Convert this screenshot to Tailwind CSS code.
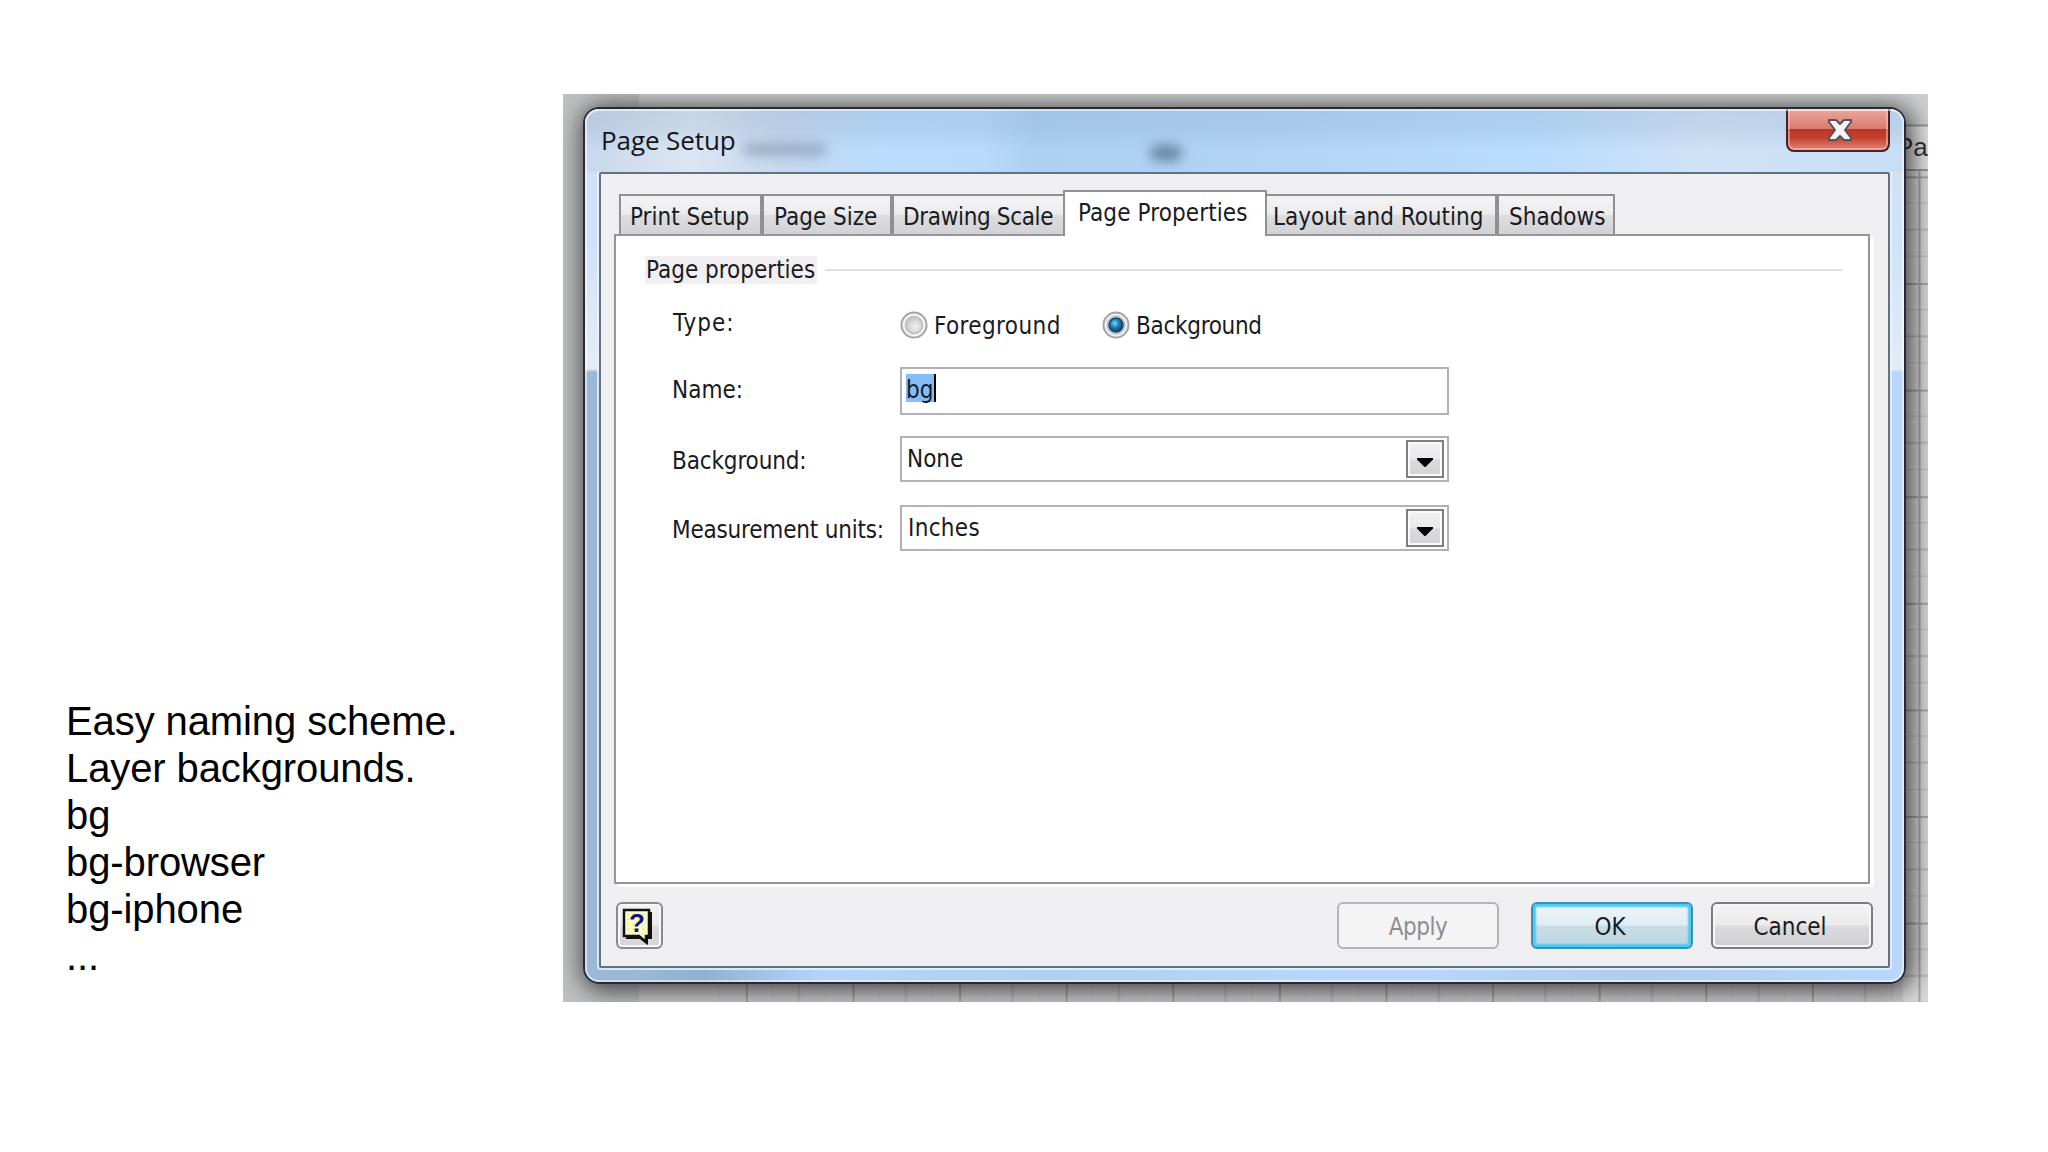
<!DOCTYPE html>
<html lang="en">

<head>
    <meta charset="UTF-8">
    <meta name="viewport" content="width=device-width, initial-scale=1.0">
    <title>Page Setup</title>
    <script src="https://cdn.jsdelivr.net/npm/@tailwindcss/browser@4"></script>
</head>

<body class="bg-white w-[2048px] h-[1152px] overflow-hidden flex items-start">
    <!-- Notes -->
    <div class="w-[563px] shrink-0 pl-[66px] pt-[698px] font-['Liberation_Sans',Arial,sans-serif] text-[40px] leading-[47px] tracking-[-0.1px] text-black">
        <p>Easy naming scheme.</p>
        <p>Layer backgrounds.</p>
        <p>bg</p>
        <p>bg-browser</p>
        <p>bg-iphone</p>
        <p>...</p>
    </div>

    <!-- Screenshot -->
    <div class="relative mt-[94px] w-[1365px] h-[908px] shrink-0 overflow-hidden bg-[#d0d1d2] pl-5 pt-[13px]">
        <!-- Drawing canvas behind the dialog -->
        <svg class="absolute inset-0" width="1365" height="908" viewBox="0 0 1365 908">
            <defs>
                <pattern id="grid" x="289.5" y="82.4" width="106.6" height="106.6" patternUnits="userSpaceOnUse">
                    <path d="M26.6 0V106.6M79.9 0V106.6M0 26.6H106.6M0 79.9H106.6" stroke="#c6c6c9" stroke-width="1.5" />
                    <path d="M53.3 0V106.6M0 53.3H106.6" stroke="#bababe" stroke-width="2" />
                    <path d="M1 0V106.6M0 1H106.6" stroke="#a6a6aa" stroke-width="2" />
                </pattern>
            </defs>
            <rect x="0" y="0" width="76" height="908" fill="#bfc1c3" />
            <rect x="76" y="860" width="1289" height="48" fill="#cfcdd0" />
            <rect x="150" y="860" width="1215" height="48" fill="url(#grid)" />
            <rect x="1340" y="32" width="25" height="44" fill="#e4e4e4" />
            <rect x="1340" y="76" width="25" height="832" fill="#dadadb" />
            <rect x="1340" y="76" width="25" height="832" fill="url(#grid)" />
            <path d="M1340 31.500H1365M1340 76H1365" stroke="#9a9a9a" stroke-width="2" />
            <text x="1333" y="62" font-family="Liberation Sans" font-size="26" fill="#333">Pag</text>
        </svg>

        <!-- Dialog -->
        <div class="relative w-[1323px] h-[877px] flex flex-col overflow-visible rounded-[16px] border-2 border-[#272a36] bg-[linear-gradient(to_bottom,#d3e2f4_0px,#cfe2f8_130px,#e4ecf7_260px,transparent_263px),linear-gradient(to_right,#9bb8d6_0%,#9bb8d6_4%,#8fb1d3_9%,#b5d4fa_18%,#afd0f0_35%,#bad6fd_60%,#b0cdf0_80%,#b9d6fc_100%)] shadow-[3px_3px_26px_3px_rgba(0,0,0,0.72)]">
            <!-- Title bar -->
            <div class="relative h-[63px] shrink-0 flex justify-between pl-4 pr-[14px] rounded-t-[14px] bg-[linear-gradient(to_bottom,rgba(110,140,170,0.18)_0%,rgba(110,140,170,0.15)_30%,rgba(255,255,255,0)_65%),linear-gradient(to_right,#c8d7ec_0%,#d9e6f3_8%,#c6d7ee_15%,#bbdcfd_22%,#b9dafb_30%,#add0f3_34%,#b2d3f6_50%,#badcfe_72%,#d0e2f6_85%,#c8def7_100%)]">
                <div class="absolute left-[158px] top-[35px] w-[84px] h-[11px] rounded-full bg-[#6f87a0]/60 blur-[6px]"></div>
                <div class="absolute left-[565px] top-[36px] w-[32px] h-[16px] rounded-full bg-[#5f7d9b]/90 blur-[6px]"></div>
                <h1 class="relative pt-[15px] font-['Open_Sans',sans-serif] text-[26px] leading-8 tracking-[-0.1px] text-[#15151c]">Page Setup</h1>
                <button class="relative w-[104px] h-[43px] flex justify-center items-center pl-1 rounded-b-[8px] border-2 border-t-0 border-[#4a2028] bg-[linear-gradient(to_bottom,#eba79d_0%,#d97c70_48%,#bb3524_50%,#c5402c_70%,#e0897a_100%)] shadow-[inset_0_0_0_2px_rgba(255,200,190,0.5)]">
                    <svg width="26" height="24" viewBox="0 0 26 24">
                        <path d="M2 2H9L13 6L17 2H24V4L18 12L24 20V22H17L13 18L9 22H2V20L8 12L2 4Z" fill="#f4f4f4" stroke="#58505c" stroke-width="2" stroke-linejoin="round" />
                    </svg>
                </button>
            </div>

            <!-- Client area -->
            <div class="mx-[14px] h-[796px] shrink-0 flex flex-col border-2 border-[#62727f] rounded-[2px] bg-[#efeff1] shadow-[0_0_0_2px_rgba(235,243,252,0.8)] font-['DejaVu_Sans_Condensed','DejaVu_Sans',sans-serif] text-2xl leading-7 text-[#1a1a22]">
                <!-- Tabs -->
                <div class="mt-[16px] pl-[18px] h-11 flex items-end whitespace-nowrap">
                    <div class="w-[143px] h-10 pl-[9px] pt-[7px] border-2 border-b-0 border-[#8f9094] bg-[linear-gradient(to_bottom,#f4f4f5_0%,#ececee_48%,#dededf_50%,#d2d2d4_100%)]">Print Setup</div>
                    <div class="w-[130px] h-10 pl-2.5 pt-[7px] border-2 border-b-0 border-[#8f9094] bg-[linear-gradient(to_bottom,#f4f4f5_0%,#ececee_48%,#dededf_50%,#d2d2d4_100%)]">Page Size</div>
                    <div class="w-[171px] h-10 pl-[9px] pt-[7px] border-2 border-b-0 border-r-0 border-[#8f9094] bg-[linear-gradient(to_bottom,#f4f4f5_0%,#ececee_48%,#dededf_50%,#d2d2d4_100%)] tracking-[-0.35px]">Drawing Scale</div>
                    <div class="relative w-[204px] h-[46px] -mb-0.5 pl-[13px] pt-[7px] border-2 border-b-0 border-[#8f9094] bg-white tracking-[0.1px]">Page Properties</div>
                    <div class="w-[230px] h-10 pl-[6px] pt-[7px] border-2 border-b-0 border-l-0 border-[#8f9094] bg-[linear-gradient(to_bottom,#f4f4f5_0%,#ececee_48%,#dededf_50%,#d2d2d4_100%)]">Layout and Routing</div>
                    <div class="w-[118px] h-10 pl-2.5 pt-[7px] border-2 border-b-0 border-[#8f9094] bg-[linear-gradient(to_bottom,#f4f4f5_0%,#ececee_48%,#dededf_50%,#d2d2d4_100%)]">Shadows</div>
                </div>

                <!-- Tab panel -->
                <div class="ml-[13px] w-[1256px] h-[650px] shrink-0 border-2 border-[#949599] bg-white shadow-[4px_3px_0_0_#fdfdfd]">
                    <div class="pt-5 pl-[30px] pr-[26px] flex items-center">
                        <span class="bg-[#f1eff1] pl-px -ml-px pr-0.5">Page properties</span>
                        <span class="ml-2 flex-1 h-0.5 bg-[#dfe0e5]"></span>
                    </div>

                    <div class="mt-6 pl-[56px]">
                        <div class="flex h-[59px]">
                            <span class="w-[228px] pt-px pl-px tracking-[1px]">Type:</span>
                            <div class="flex pt-1">
                                <svg class="-mt-px" width="28" height="28" viewBox="0 0 28 28">
                                    <defs>
                                        <radialGradient id="off" cx="0.6" cy="0.6" r="0.6">
                                            <stop offset="0" stop-color="#f2f2f2" />
                                            <stop offset="1" stop-color="#c4c4c6" />
                                        </radialGradient>
                                    </defs>
                                    <circle cx="14" cy="14" r="12.500" fill="#f3f3f3" stroke="#a3a4a8" stroke-width="2" />
                                    <circle cx="14" cy="14" r="8.500" fill="url(#off)" stroke="#bdbdc0" stroke-width="1.500" />
                                </svg>
                                <span class="ml-1.5 w-[168px] tracking-[0.4px]">Foreground</span>
                                <svg class="-mt-px" width="28" height="28" viewBox="0 0 28 28">
                                    <defs>
                                        <radialGradient id="on" cx="0.42" cy="0.38" r="0.6">
                                            <stop offset="0" stop-color="#7fdcfb" />
                                            <stop offset="0.45" stop-color="#2088bb" />
                                            <stop offset="1" stop-color="#123f63" />
                                        </radialGradient>
                                    </defs>
                                    <circle cx="14" cy="14" r="12.500" fill="#eeeef0" stroke="#a3a4a8" stroke-width="2" />
                                    <circle cx="14" cy="14" r="9" fill="#d5dbe0" stroke="#b4b8bd" stroke-width="1" />
                                    <circle cx="14" cy="14" r="7" fill="url(#on)" stroke="#1b4566" stroke-width="1.500" />
                                </svg>
                                <span class="ml-1.5 tracking-[-0.3px]">Background</span>
                            </div>
                        </div>

                        <div class="flex h-[69px]">
                            <span class="w-[228px] pt-[9px]">Name:</span>
                            <div class="w-[549px] h-12 border-2 border-[#b3b1b7] pl-1 pt-[5px] flex items-start">
                                <span class="bg-[#86bdf9] border-r-2 border-black h-7 w-[30px] leading-[32px]">bg</span>
                            </div>
                        </div>

                        <div class="flex h-[69px]">
                            <span class="w-[228px] pt-[11px] tracking-[-0.15px]">Background:</span>
                            <div class="w-[549px] h-[46px] border-2 border-[#b3b1b7] pl-[5px] pr-[3px] flex justify-between">
                                <span class="pt-[7px]">None</span>
                                <span class="mt-0.5 w-[38px] h-[38px] border-2 border-[#7e7d82] bg-[linear-gradient(to_bottom,#f1f1f2_0%,#e9e8ea_50%,#dbdadd_52%,#d3d2d5_100%)] shadow-[inset_0_0_0_2px_#fafafa] flex justify-center pt-4">
                                    <svg width="16" height="9" viewBox="0 0 16 9"><path d="M0 0H16V1.500L8.500 9H7.500L0 1.500Z" fill="#000" /></svg>
                                </span>
                            </div>
                        </div>

                        <div class="flex">
                            <span class="w-[228px] pt-[11px] tracking-[-0.2px] whitespace-nowrap">Measurement units:</span>
                            <div class="w-[549px] h-[46px] border-2 border-[#b3b1b7] pl-1 pr-[3px] flex justify-between">
                                <span class="pt-[7px] pl-0.5 tracking-[0.3px]">Inches</span>
                                <span class="mt-0.5 w-[38px] h-[38px] border-2 border-[#7e7d82] bg-[linear-gradient(to_bottom,#f1f1f2_0%,#e9e8ea_50%,#dbdadd_52%,#d3d2d5_100%)] shadow-[inset_0_0_0_2px_#fafafa] flex justify-center pt-4">
                                    <svg width="16" height="9" viewBox="0 0 16 9"><path d="M0 0H16V1.500L8.500 9H7.500L0 1.500Z" fill="#000" /></svg>
                                </span>
                            </div>
                        </div>
                    </div>
                </div>

                <!-- Buttons -->
                <div class="mt-[18px] pl-[15px] pr-[15px] flex items-start">
                    <button class="w-[47px] h-[47px] rounded-[6px] border-2 border-[#8b8a8e] bg-[linear-gradient(to_bottom,#f2f2f2_0%,#ebebec_50%,#dddddf_52%,#d5d5d7_100%)] shadow-[inset_0_0_0_2px_#f8f8f8] pl-1 pt-0.5">
                        <svg width="34" height="38" viewBox="0 0 34 38">
                            <defs>
                                <pattern id="dots" width="5" height="5" patternUnits="userSpaceOnUse">
                                    <rect width="5" height="5" fill="#fffff4" />
                                    <rect width="2.500" height="2.500" fill="#f6f66a" />
                                    <rect x="2.500" y="2.500" width="2.500" height="2.500" fill="#fbfbb0" />
                                </pattern>
                            </defs>
                            <path d="M4 4H30V31H26V37L18 31H4Z" fill="#111" />
                            <path d="M2 2H27V28H24V34L17 28H2Z" fill="url(#dots)" stroke="#111" stroke-width="2.500" />
                            <text x="15" y="24" text-anchor="middle" font-family="Liberation Sans" font-weight="bold" font-size="26" fill="#14108a">?</text>
                        </svg>
                    </button>
                    <button class="ml-auto w-[162px] h-[47px] rounded-[6px] border-2 border-[#b5b4b8] bg-[#f4f4f5] text-[#8d8c90] tracking-[-0.5px] pt-[3px]">Apply</button>
                    <button class="ml-8 w-[162px] h-[47px] rounded-[6px] border-2 border-[#3d8fb8] bg-[linear-gradient(to_bottom,#edf4f8_0%,#e0edf3_48%,#cadde6_52%,#bcd6e0_100%)] shadow-[inset_0_0_2px_3px_#4cc9f2] pt-[3px] pr-1">OK</button>
                    <button class="ml-[18px] w-[162px] h-[47px] rounded-[6px] border-2 border-[#7c7b80] bg-[linear-gradient(to_bottom,#f3f3f3_0%,#ebebec_48%,#dcdcde_52%,#cfcfd1_100%)] shadow-[inset_0_0_0_2px_#f5f5f5] pr-1 pt-[3px]">Cancel</button>
                </div>
            </div>

            <!-- Light edge inside the frame -->
            <div class="absolute inset-0 rounded-[14px] border-2 border-white/55 pointer-events-none"></div>
        </div>
    </div>
</body>

</html>
